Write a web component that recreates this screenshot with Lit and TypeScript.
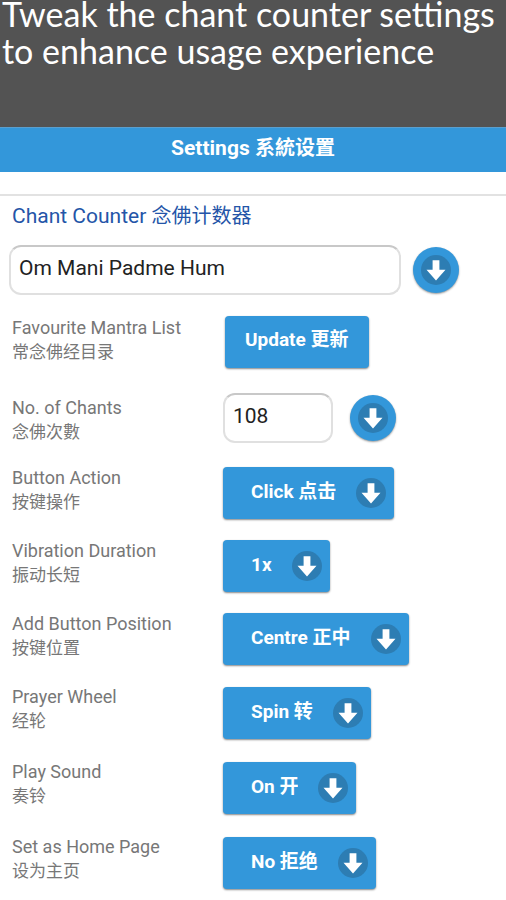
import { LitElement, html, css, svg } from "lit";
import { customElement, property } from "lit/decorators.js";

const arrow = svg`<path d="M11.6 5.2h6.8v9.6h6.1L15 25.4 5.5 14.8h6.1z" fill="#fff"/>`;

@customElement("arrow-badge")
export class ArrowBadge extends LitElement {
  static styles = css`
    :host { display: block; width: 30px; height: 30px; }
    .icon { display: block; width: 100%; height: 100%; }
  `;
  render() {
    return html`<svg class="icon" viewBox="0 0 30 30" aria-hidden="true">
      <circle cx="15" cy="15" r="15" fill="#2d7db3" />${arrow}
    </svg>`;
  }
}

interface Choice {
  id: string;
  label: string;
  sub: string;
  options: string[];
}

const actionChoices: Choice[] = [
  { id: "action", label: "Button Action", sub: "按键操作", options: ["Click 点击"] },
  { id: "vibration", label: "Vibration Duration", sub: "振动长短", options: ["1x", "2x", "3x"] },
  { id: "position", label: "Add Button Position", sub: "按键位置", options: ["Centre 正中"] },
];

const pageChoices: Choice[] = [
  { id: "wheel", label: "Prayer Wheel", sub: "经轮", options: ["Spin 转"] },
  { id: "sound", label: "Play Sound", sub: "奏铃", options: ["On 开"] },
  { id: "home", label: "Set as Home Page", sub: "设为主页", options: ["No 拒绝"] },
];

@customElement("app-root")
export class AppRoot extends LitElement {
  @property() mantra = "Om Mani Padme Hum";
  @property() chants = "108";

  static styles = css`
    :host {
      display: flow-root;
      min-height: 100vh;
      background: #fff;
      color: #777;
      font-family: Roboto, "Noto Sans CJK SC", sans-serif;
      font-size: 18px;
      line-height: 24px;
    }
    * { box-sizing: border-box; }
    .banner {
      display: flow-root;
      padding: 0 2px 58px;
      background: #535353;
      color: #fff;
    }
    .banner-text {
      margin: -5px 0 0;
      font: 400 34px/37px Lato, sans-serif;
    }
    .title {
      margin: 0;
      padding: 8px 0 12px;
      border-top: 1px solid #5a9fce;
      background: #3397da;
      color: #fff;
      text-align: center;
      font-size: 21px;
      line-height: 24px;
      font-weight: 700;
    }
    .zh { font-size: 20px; }
    .settings {
      margin-top: 22px;
      border-top: 2px solid #e2e2e2;
      padding: 8px 0 0;
    }
    .heading {
      margin: 0 12px;
      color: #2455a8;
      font-size: 21px;
      line-height: 24px;
      font-weight: 400;
    }
    .mantra {
      display: flex;
      align-items: center;
      gap: 12px;
      margin: 17px 47px 21px 9px;
    }
    .field {
      height: 50px;
      min-width: 0;
      padding: 0 8px 5px;
      border: 2px solid #e0e0e0;
      border-top-color: #c8c8c8;
      border-radius: 12px;
      background: #fff;
      color: #222;
      font: inherit;
      font-size: 21px;
    }
    .wide { flex: 1; }
    .count { width: 110px; }
    .round {
      display: grid;
      place-items: center;
      flex: none;
      width: 46px;
      height: 46px;
      padding: 0;
      border: 0;
      border-radius: 50%;
      background: #3397da;
      box-shadow: 0 1px 2px #999;
    }
    .row {
      display: grid;
      grid-template-columns: 211px 1fr;
      align-items: start;
      justify-items: start;
      padding-left: 12px;
    }
    .update-row { height: 77px; }
    .count-row { height: 73px; }
    .count-row .label { padding-top: 3px; }
    .action-row { height: 73px; }
    .action-row .control { padding-top: 1px; }
    .page-row { height: 75px; }
    .page-row .control { padding-top: 2px; }
    .label { display: block; }
    .sub { display: block; font-size: 17px; }
    .pair { display: flex; align-items: center; gap: 17px; }
    .button {
      height: 52px;
      border: 0;
      border-radius: 4px;
      background: #3397da;
      color: #fff;
      box-shadow: 0 1px 2px #888;
      font: inherit;
      font-size: 19px;
      font-weight: 700;
    }
    .update { padding: 0 20px 4px; margin-left: 2px; }
    .drop { display: grid; align-items: center; justify-items: end; }
    .drop > * { grid-area: 1 / 1; }
    .drop .button {
      appearance: none;
      field-sizing: content;
      padding: 0 58px 2px 28px;
    }
    .drop arrow-badge { margin-right: 8px; pointer-events: none; z-index: 1; }
  `;

  private choiceRow(c: Choice, kind: string) {
    return html`<div class="row ${kind}">
      <label class="label" for=${c.id}>${c.label}<span class="sub">${c.sub}</span></label>
      <div class="control">
        <div class="drop">
          <select class="button" id=${c.id}>
            ${c.options.map((o) => html`<option>${o}</option>`)}
          </select>
          <arrow-badge></arrow-badge>
        </div>
      </div>
    </div>`;
  }

  render() {
    return html`
      <header class="banner">
        <p class="banner-text">Tweak the chant counter settings<br />to enhance usage experience</p>
      </header>
      <h1 class="title">Settings <span class="zh">系統设置</span></h1>
      <main class="settings">
        <h2 class="heading" id="counter">Chant Counter <span class="zh">念佛计数器</span></h2>
        <div class="mantra">
          <input class="field wide" aria-labelledby="counter" .value=${this.mantra} />
          <button class="round" aria-label="Choose mantra"><arrow-badge></arrow-badge></button>
        </div>
        <div class="row update-row">
          <label class="label" for="update">Favourite Mantra List<span class="sub">常念佛经目录</span></label>
          <button class="button update" id="update">Update 更新</button>
        </div>
        <div class="row count-row">
          <label class="label" for="count">No. of Chants<span class="sub">念佛次數</span></label>
          <div class="pair">
            <input class="field count" id="count" inputmode="numeric" .value=${this.chants} />
            <button class="round" aria-label="Choose number of chants"><arrow-badge></arrow-badge></button>
          </div>
        </div>
        ${actionChoices.map((c) => this.choiceRow(c, "action-row"))}
        ${pageChoices.map((c) => this.choiceRow(c, "page-row"))}
      </main>
    `;
  }
}
